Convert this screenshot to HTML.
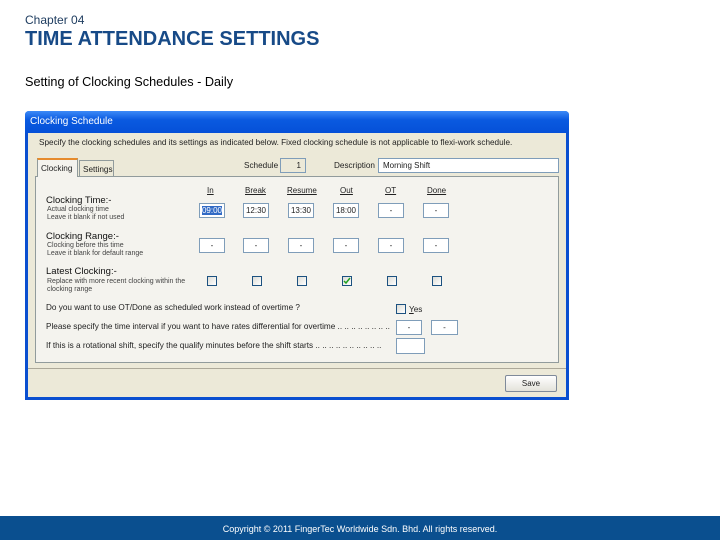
<!DOCTYPE html>
<html><head><meta charset="utf-8"><style>
*{margin:0;padding:0;box-sizing:border-box}
body{width:720px;height:540px;background:#fff;position:relative;font-family:"Liberation Sans",sans-serif;overflow:hidden}
.a{position:absolute;white-space:nowrap}
.s{font-size:8.2px;color:#222}
.xs{font-size:7px;color:#444}
.h{font-size:9.5px;color:#111}
.box{position:absolute;background:#fff;border:1px solid #7f9db9;font-size:8px;text-align:center;line-height:13px;color:#222}
.cb{position:absolute;width:10px;height:10px;border:1px solid #1c5180;background:linear-gradient(135deg,#dcdcd6,#fff)}
.u{text-decoration:underline;font-size:8px;color:#222}
</style></head><body>
<div class="a" style="left:25px;top:13px;font-size:12px;color:#1f3d60">Chapter 04</div>
<div class="a" style="left:25px;top:28px;font-size:20px;font-weight:bold;color:#174a87">TIME ATTENDANCE SETTINGS</div>
<div class="a" style="left:25px;top:75px;font-size:12.7px;color:#000">Setting of Clocking Schedules - Daily</div>

<div class="a" style="left:25px;top:111px;width:544px;height:289px;background:#0a4fd0;border-radius:4px 4px 0 0"></div>
<div class="a" style="left:25px;top:111px;width:544px;height:22px;background:linear-gradient(#3d8af7,#0a5ae0 40%,#0550d8);border-radius:4px 4px 0 0"></div>
<div class="a" style="left:30px;top:116px;font-size:10px;color:#fff">Clocking Schedule</div>
<div class="a" style="left:28px;top:133px;width:538px;height:264px;background:#ece9d8"></div>
<div class="a s" style="left:39px;top:138px">Specify the clocking schedules and its settings as indicated below. Fixed clocking schedule is not applicable to flexi-work schedule.</div>

<div class="a" style="left:35px;top:176px;width:524px;height:187px;border:1px solid #919b9c;background:#f4f3ee"></div>
<div class="a" style="left:37px;top:158px;width:41px;height:19px;background:#f4f3ee;border:1px solid #919b9c;border-bottom:none;border-top:2px solid #e68b2c"></div>
<div class="a s" style="left:41px;top:164px">Clocking</div>
<div class="a" style="left:79px;top:160px;width:35px;height:16px;background:#ece9d8;border:1px solid #919b9c;border-bottom:none"></div>
<div class="a s" style="left:83px;top:165px">Settings</div>
<div class="a s" style="left:244px;top:161px">Schedule</div>
<div class="box" style="left:280px;top:158px;width:26px;height:15px;background:#ece9d8;text-align:right;padding-right:4px">1</div>
<div class="a s" style="left:334px;top:161px">Description</div>
<div class="box" style="left:378px;top:158px;width:181px;height:15px;text-align:left;padding-left:4px">Morning Shift</div>

<div class="a u" style="left:207px;top:186px">In</div>
<div class="a u" style="left:245px;top:186px">Break</div>
<div class="a u" style="left:287px;top:186px">Resume</div>
<div class="a u" style="left:340px;top:186px">Out</div>
<div class="a u" style="left:385px;top:186px">OT</div>
<div class="a u" style="left:427px;top:186px">Done</div>

<div class="a h" style="left:46px;top:195px">Clocking Time:-</div>
<div class="a xs" style="left:47px;top:206px">Actual clocking time</div>
<div class="a xs" style="left:47px;top:214px">Leave it blank if not used</div>
<div class="box" style="left:199px;top:203px;width:26px;height:15px"><span style="background:#316ac5;color:#fff">09:00</span></div>
<div class="box" style="left:243px;top:203px;width:26px;height:15px">12:30</div>
<div class="box" style="left:288px;top:203px;width:26px;height:15px">13:30</div>
<div class="box" style="left:333px;top:203px;width:26px;height:15px">18:00</div>
<div class="box" style="left:378px;top:203px;width:26px;height:15px">-</div>
<div class="box" style="left:423px;top:203px;width:26px;height:15px">-</div>

<div class="a h" style="left:46px;top:231px">Clocking Range:-</div>
<div class="a xs" style="left:47px;top:242px">Clocking before this time</div>
<div class="a xs" style="left:47px;top:250px">Leave it blank for default range</div>
<div class="box" style="left:199px;top:238px;width:26px;height:15px">-</div>
<div class="box" style="left:243px;top:238px;width:26px;height:15px">-</div>
<div class="box" style="left:288px;top:238px;width:26px;height:15px">-</div>
<div class="box" style="left:333px;top:238px;width:26px;height:15px">-</div>
<div class="box" style="left:378px;top:238px;width:26px;height:15px">-</div>
<div class="box" style="left:423px;top:238px;width:26px;height:15px">-</div>

<div class="a h" style="left:46px;top:266px">Latest Clocking:-</div>
<div class="a xs" style="left:47px;top:278px">Replace with more recent clocking within the</div>
<div class="a xs" style="left:47px;top:286px">clocking range</div>
<div class="cb" style="left:207px;top:276px"></div>
<div class="cb" style="left:252px;top:276px"></div>
<div class="cb" style="left:297px;top:276px"></div>
<div class="cb" style="left:342px;top:276px"><svg width="8" height="8" style="position:absolute;left:0;top:0"><path d="M1 4 L3 6 L7 1" stroke="#21a121" stroke-width="1.5" fill="none"/></svg></div>
<div class="cb" style="left:387px;top:276px"></div>
<div class="cb" style="left:432px;top:276px"></div>

<div class="a s" style="left:46px;top:303px">Do you want to use OT/Done as scheduled work instead of overtime ?</div>
<div class="cb" style="left:396px;top:304px"></div>
<div class="a s" style="left:409px;top:305px"><u>Y</u>es</div>
<div class="a s" style="left:46px;top:322px">Please specify the time interval if you want to have rates differential for overtime .. .. .. .. .. .. .. ..</div>
<div class="box" style="left:396px;top:320px;width:26px;height:15px">-</div>
<div class="box" style="left:431px;top:320px;width:27px;height:15px">-</div>
<div class="a s" style="left:46px;top:341px">If this is a rotational shift, specify the qualify minutes before the shift starts .. .. .. .. .. .. .. .. .. ..</div>
<div class="box" style="left:396px;top:338px;width:29px;height:16px"></div>

<div class="a" style="left:28px;top:368px;width:538px;height:1px;background:#fff;border-top:1px solid #aca899"></div>
<div class="a" style="left:505px;top:375px;width:52px;height:17px;background:linear-gradient(#fff,#e3e2da);border:1px solid #7f8a9a;border-radius:2px;font-size:8px;text-align:center;line-height:15px;color:#222">Save</div>

<div class="a" style="left:0;top:516px;width:720px;height:24px;background:#0a4f8f"></div>
<div class="a" style="left:0;top:524px;width:720px;text-align:center;font-size:9px;color:#fff">Copyright © 2011 FingerTec Worldwide Sdn. Bhd. All rights reserved.</div>
</body></html>
